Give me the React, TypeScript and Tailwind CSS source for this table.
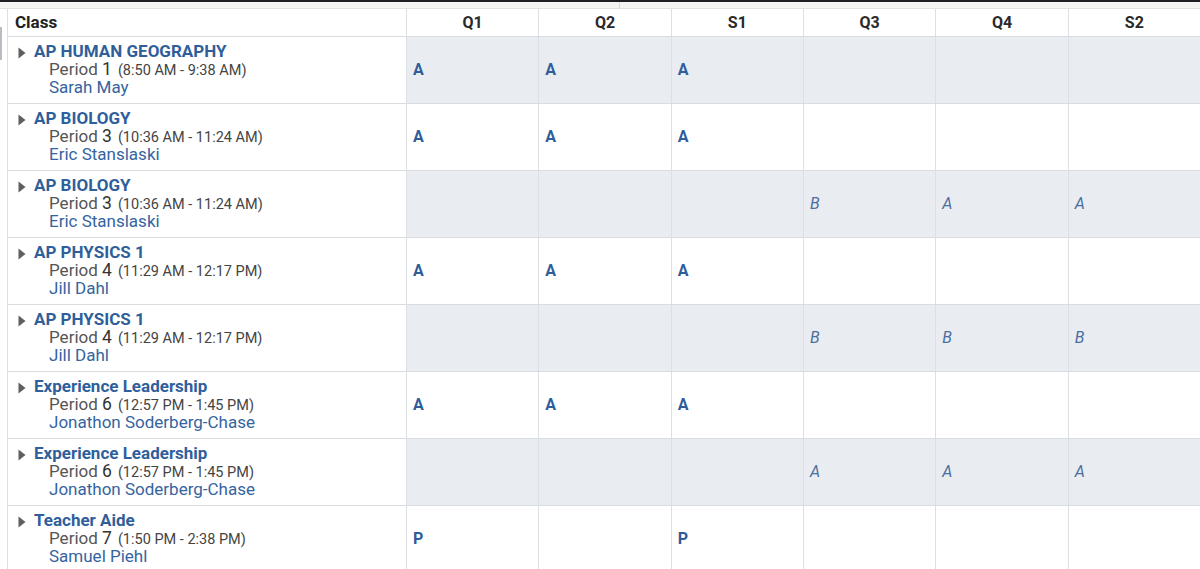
import React from "react";

type Row = {
  name: string;
  period: number;
  time: string;
  teacher: string;
  grades: string[];
  shaded: boolean;
  italic: boolean;
};

const rows: Row[] = [
  { name: "AP HUMAN GEOGRAPHY", period: 1, time: "(8:50 AM - 9:38 AM)", teacher: "Sarah May", grades: ["A", "A", "A", "", "", ""], shaded: true, italic: false },
  { name: "AP BIOLOGY", period: 3, time: "(10:36 AM - 11:24 AM)", teacher: "Eric Stanslaski", grades: ["A", "A", "A", "", "", ""], shaded: false, italic: false },
  { name: "AP BIOLOGY", period: 3, time: "(10:36 AM - 11:24 AM)", teacher: "Eric Stanslaski", grades: ["", "", "", "B", "A", "A"], shaded: true, italic: true },
  { name: "AP PHYSICS 1", period: 4, time: "(11:29 AM - 12:17 PM)", teacher: "Jill Dahl", grades: ["A", "A", "A", "", "", ""], shaded: false, italic: false },
  { name: "AP PHYSICS 1", period: 4, time: "(11:29 AM - 12:17 PM)", teacher: "Jill Dahl", grades: ["", "", "", "B", "B", "B"], shaded: true, italic: true },
  { name: "Experience Leadership", period: 6, time: "(12:57 PM - 1:45 PM)", teacher: "Jonathon Soderberg-Chase", grades: ["A", "A", "A", "", "", ""], shaded: false, italic: false },
  { name: "Experience Leadership", period: 6, time: "(12:57 PM - 1:45 PM)", teacher: "Jonathon Soderberg-Chase", grades: ["", "", "", "A", "A", "A"], shaded: true, italic: true },
  { name: "Teacher Aide", period: 7, time: "(1:50 PM - 2:38 PM)", teacher: "Samuel Piehl", grades: ["P", "", "P", "", "", ""], shaded: false, italic: false },
];

const terms = ["Q1", "Q2", "S1", "Q3", "Q4", "S2"];

function Caret() {
  return (
    <svg width="8" height="12" viewBox="0 0 8 12" className="mt-[5px] shrink-0">
      <path d="M0.5 0.5 L7.5 6 L0.5 11.5 Z" fill="#5f5f5f" />
    </svg>
  );
}

export default function App() {
  return (
    <div className="w-[1200px] h-[569px] overflow-hidden bg-white font-['Roboto',sans-serif] relative">
      <div className="h-[2px] bg-[#1e1e22]" />
      <div className="h-[7px] bg-[#f4f4f4] border-b border-[#e2e2e2] flex">
        <div className="w-[620px] border-r border-[#d8d8d8]" />
      </div>
      <div className="absolute left-0 top-[27px] w-[2px] h-[33px] bg-[#b9bcc2]" />
      <div className="ml-[7px] border-l border-[#dcdfe3]">
        <div className="grid grid-cols-[398px_repeat(6,1fr)] h-[28px] border-b border-[#d9dce1]">
          <div className="pl-[7px] flex items-center text-[17px] font-bold text-[#222]">Class</div>
          {terms.map((t) => (
            <div key={t} className="border-l border-[#dcdfe3] flex items-center justify-center text-[16px] font-bold text-[#2a2a2a]">
              {t}
            </div>
          ))}
        </div>
        {rows.map((r, i) => (
          <div key={i} className="grid grid-cols-[398px_repeat(6,1fr)] h-[67px] border-b border-[#d9dce1]">
            <div className="pl-[10px] pt-[5px] flex gap-[8px]">
              <Caret />
              <div className="flex flex-col">
                <div className="text-[17px] leading-[19px] font-bold text-[#2f5f9b]">{r.name}</div>
                <div className="pl-[15px] leading-[17px] text-[#555]">
                  <span className="text-[17px]">Period </span>
                  <span className="text-[17.5px] text-[#333]">{r.period}</span>
                  <span className="text-[14.5px] ml-[6px] text-[#444]">{r.time}</span>
                </div>
                <div className="pl-[15px] text-[17px] leading-[16px] text-[#3564a0]">{r.teacher}</div>
              </div>
            </div>
            {r.grades.map((g, j) => (
              <div
                key={j}
                className={`border-l border-[#dcdfe3] flex items-center pl-[6px] ${r.shaded ? "bg-[#e9ecf1]" : "bg-white"}`}
              >
                {g &&
                  (r.italic ? (
                    <span className="text-[16px] italic text-[#4b6f9f]">{g}</span>
                  ) : (
                    <span className="text-[16px] font-bold text-[#2e5d9a]">{g}</span>
                  ))}
              </div>
            ))}
          </div>
        ))}
      </div>
    </div>
  );
}
